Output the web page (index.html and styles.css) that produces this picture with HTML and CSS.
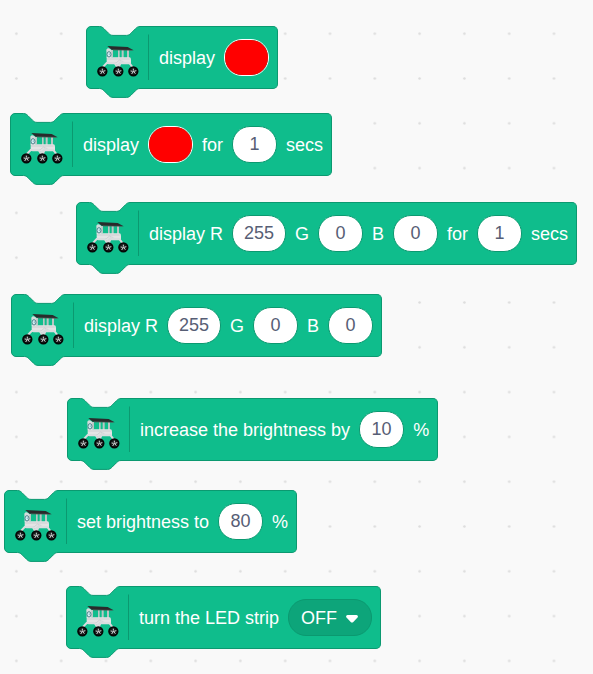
FILE: index.html
```html
<!DOCTYPE html>
<html lang="en">
<head>
<meta charset="utf-8">
<meta name="viewport" content="width=device-width, initial-scale=1">
<title>LED strip blocks</title>
<link rel="stylesheet" href="styles.css">
</head>
<body>
<svg class="defs" aria-hidden="true">
  <defs>
    <!-- Left part of a stack block: notch, tab, separator and rover -->
    <symbol id="cap" viewBox="0 0 64 73">
      <path class="cap-shape" d="M64 .5H54c-2.200 0-3.400 1.100-4.500 2.200l-4.500 4.500c-1.100 1.100-2.200 2.200-4.500 2.200H27c-2.300 0-3.400-1.100-4.500-2.200L18 2.700C16.900 1.600 15.700 .5 13.500 .5H5A4.500 4.500 0 0 0 .5 5V58A4.500 4.500 0 0 0 5 62.500H13.500c2.200 0 3.400 1.100 4.500 2.200l4.500 4.500c1.100 1.100 2.200 2.200 4.500 2.200H40.500c2.300 0 3.400-1.100 4.500-2.200l4.500-4.500c1.100-1.100 2.200-2.200 4.500-2.200H64"/>
      <path class="cap-line" d="M62.500 8.500V54"/>
      <g transform="translate(4 9) scale(.33333)">
        <path d="M62 45h7v22h-7zM84 45h5v24h-5zM95 45h6v24h-6zM111 45h6v24h-6z" fill="#b9c7c4"/>
        <path d="M49 44q4-7 11-3l4 4v24H50z" fill="#d5dcdc"/>
        <path d="M50 67h68q5 0 5 7v10q0 4-6 4H56q-5 0-6-5z" fill="#e3e4e5"/>
        <path d="M51 72h68M52 85l27-2 10-8 16 9 15 1" fill="none" stroke="#c2c6c8" stroke-width="2"/>
        <path d="M34 101l16-17 24 0 11 17M86 100l5-17 27 1 12 16" fill="none" stroke="#dadddf" stroke-width="6"/>
        <path d="M76 92l18-17 5 2-13 20" fill="#d8dbdd"/>
        <path d="M52 33l61 3 18 10-66-2z" fill="#292a2b"/>
        <path d="M69 45l58 1" stroke="#555f5c" stroke-width="2"/>
        <ellipse cx="57" cy="58" rx="6" ry="8" fill="#d9f2f5" stroke="#326b78" stroke-width="2.500"/>
        <ellipse cx="58" cy="58" rx="2" ry="3" fill="#8fbcc8"/>
        <g id="wheel">
          <circle cx="37" cy="109" r="13" fill="#171b1a" stroke="#050606" stroke-width="5"/>
          <path d="M37 101v6M29 108l6 1M39 109l7-2M36 111l-4 6M39 111l4 5" stroke="#d8dddd" stroke-width="3"/>
          <circle cx="37" cy="109" r="2" fill="#eee"/>
        </g>
        <use href="#wheel" x="48"/>
        <use href="#wheel" x="93"/>
      </g>
    </symbol>
    <pattern id="dots" x="-6" y="11.300" width="44.800" height="44.800" patternUnits="userSpaceOnUse">
      <circle cx="22.400" cy="22.400" r="1.300" fill="#ddd"/>
    </pattern>
  </defs>
</svg>

<main class="workspace">
  <svg class="grid" aria-hidden="true"><rect width="100%" height="100%" fill="url(#dots)"/></svg>

  <div class="block display-color">
    <svg class="cap" aria-hidden="true"><use href="#cap"/></svg>
    <div class="body">
      <label for="color-a">display</label>
      <input class="color" id="color-a" type="color" value="#ff0000">
    </div>
  </div>

  <div class="block display-color-timed">
    <svg class="cap" aria-hidden="true"><use href="#cap"/></svg>
    <div class="body">
      <label for="color-b">display</label>
      <input class="color" id="color-b" type="color" value="#ff0000">
      <label for="secs-b">for</label>
      <input class="field" id="secs-b" type="text" value="1">
      <span>secs</span>
    </div>
  </div>

  <div class="block display-rgb-timed">
    <svg class="cap" aria-hidden="true"><use href="#cap"/></svg>
    <div class="body">
      <label for="r-c">display R</label>
      <input class="field wide" id="r-c" type="text" value="255">
      <label for="g-c">G</label>
      <input class="field" id="g-c" type="text" value="0">
      <label for="b-c">B</label>
      <input class="field" id="b-c" type="text" value="0">
      <label for="secs-c">for</label>
      <input class="field" id="secs-c" type="text" value="1">
      <span>secs</span>
    </div>
  </div>

  <div class="block display-rgb">
    <svg class="cap" aria-hidden="true"><use href="#cap"/></svg>
    <div class="body">
      <label for="r-d">display R</label>
      <input class="field wide" id="r-d" type="text" value="255">
      <label for="g-d">G</label>
      <input class="field" id="g-d" type="text" value="0">
      <label for="b-d">B</label>
      <input class="field" id="b-d" type="text" value="0">
    </div>
  </div>

  <div class="block increase-brightness">
    <svg class="cap" aria-hidden="true"><use href="#cap"/></svg>
    <div class="body">
      <label for="step">increase the brightness by</label>
      <input class="field" id="step" type="text" value="10">
      <span>%</span>
    </div>
  </div>

  <div class="block set-brightness">
    <svg class="cap" aria-hidden="true"><use href="#cap"/></svg>
    <div class="body">
      <label for="level">set brightness to</label>
      <input class="field" id="level" type="text" value="80">
      <span>%</span>
    </div>
  </div>

  <div class="block turn-strip">
    <svg class="cap" aria-hidden="true"><use href="#cap"/></svg>
    <div class="body">
      <label for="state">turn the LED strip</label>
      <div class="menu">
        <select id="state"><option>OFF</option></select>
        <svg class="arrow" viewBox="0 0 12 8" aria-hidden="true"><path d="M1.500 0h9q2.200.8 1 2.500L7.300 7q-1.300 1.200-2.600 0L.5 2.500Q-.7.800 1.500 0z" fill="#fff"/></svg>
      </div>
    </div>
  </div>
</main>
</body>
</html>
```
FILE: styles.css
```css
:root {
  --green: #0fbd8c;
  --green-dark: #0da57a;
  --outline: #0b9970;
}

* {
  box-sizing: border-box;
}

body {
  margin: 0;
  background: #f9f9f9;
  font-family: "Liberation Sans", Arial, sans-serif;
  font-size: 18px;
  line-height: 20px;
}

.defs {
  position: absolute;
  width: 0;
  height: 0;
}

.workspace {
  position: relative;
  min-height: 100vh;
  overflow: hidden;
}

.grid {
  position: absolute;
  inset: 0;
  width: 100%;
  height: 100%;
}

/* Blocks are placed freely on the workspace canvas */
.block {
  position: absolute;
  display: flex;
  align-items: flex-start;
  color: #fff;
  white-space: nowrap;
}

.display-color { left: 86px; top: 26px; }
.display-color-timed { left: 10px; top: 113px; }
.display-rgb-timed { left: 76px; top: 202px; }
.display-rgb { left: 11px; top: 294px; }
.increase-brightness { left: 67px; top: 398px; }
.set-brightness { left: 4px; top: 490px; }
.turn-strip { left: 66px; top: 586px; }

.cap {
  flex: none;
  width: 64px;
  height: 73px;
}

.cap-shape {
  fill: var(--green);
  stroke: var(--outline);
}

.cap-line {
  fill: none;
  stroke: var(--outline);
}

.body {
  display: flex;
  align-items: center;
  gap: 9px;
  height: 63px;
  padding: 0 8px 0 9px;
  background: var(--green);
  border: 1px solid var(--outline);
  border-left: 0;
  border-radius: 0 5px 5px 0;
}

.field,
.color,
select {
  height: 37px;
  margin: 0;
  font: inherit;
  border: 1px solid var(--outline);
  border-radius: 18px;
}

.field {
  width: 45px;
  padding: 0;
  background: #fff;
  color: #575e75;
  text-align: center;
}

.wide {
  width: 54px;
}

.color {
  appearance: none;
  width: 45px;
  padding: 0;
  overflow: hidden;
  background: #f00;
  border-color: #fff;
}

.color::-webkit-color-swatch-wrapper {
  padding: 0;
}

.color::-webkit-color-swatch {
  border: 0;
}

.menu {
  display: flex;
  position: relative;
}

select {
  appearance: none;
  width: 84px;
  padding: 0 12px;
  background: var(--green-dark);
  color: #fff;
}

.arrow {
  position: absolute;
  right: 14px;
  top: 16px;
  width: 12px;
  height: 8px;
  pointer-events: none;
}
```
